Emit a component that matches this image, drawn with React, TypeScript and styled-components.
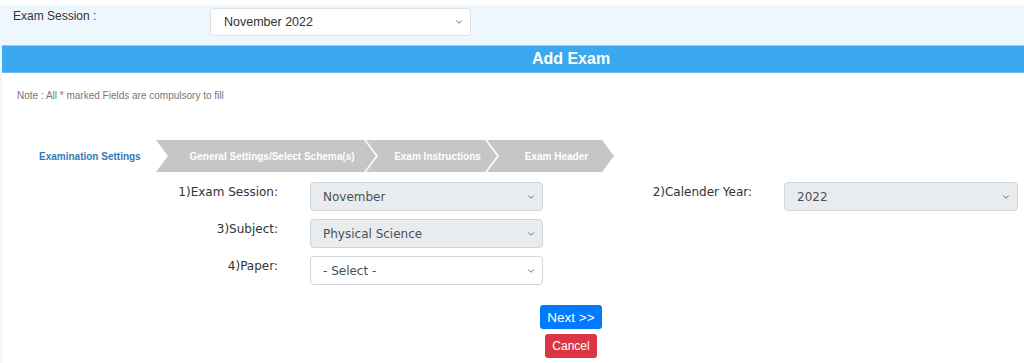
import React from "react";
import styled, { createGlobalStyle } from "styled-components";
import { ChevronDown } from "lucide-react";

const GlobalStyle = createGlobalStyle`
  body {
    margin: 0;
    background: #fff;
    font-family: "Liberation Sans", Arial, sans-serif;
  }
  * { box-sizing: border-box; }
`;

const Page = styled.div`
  padding-top: 5px;
  background: #fff;
`;

const Shell = styled.div`
  background: #eef6fe;
  padding-left: 2px;
  min-height: 358px;
`;

const SessionBar = styled.div`
  height: 40px;
  display: flex;
  align-items: flex-start;
  padding-left: 11px;
`;

const SessionLabel = styled.div`
  width: 197px;
  padding-top: 4px;
  font-size: 12px;
  line-height: 14px;
  color: #333;
`;

const SelectWrap = styled.div<{ $w: number }>`
  position: relative;
  width: ${(p) => p.$w}px;
`;

const TopSelect = styled.select`
  appearance: none;
  width: 100%;
  height: 28px;
  margin-top: 3px;
  padding: 0 24px 0 13px;
  background: #fff;
  border: 1px solid #dde1e6;
  border-radius: 4px;
  font-family: "Liberation Sans", Arial, sans-serif;
  font-size: 12.5px;
  color: #333;
`;

const FieldSelect = styled.select<{ $locked?: boolean }>`
  appearance: none;
  width: 100%;
  height: 29px;
  padding: 0 24px 0 12px;
  background: ${(p) => (p.$locked ? "#e9ecef" : "#fff")};
  border: 1px solid #ced4da;
  border-radius: 4px;
  font-family: "DejaVu Sans", Verdana, sans-serif;
  font-size: 12px;
  color: #495057;
`;

const Caret = styled.span<{ $top: number }>`
  position: absolute;
  right: 7px;
  top: ${(p) => p.$top}px;
  display: flex;
  color: #555;
  pointer-events: none;
`;

const Card = styled.div`
  background: #fff;
  min-height: 318px;
`;

const CardHeader = styled.div`
  height: 28px;
  background: #3aa9f0;
  border-top: 1px solid #8ccaf1;
  border-bottom: 1px solid #6bbcf0;
  display: flex;
  align-items: center;
  justify-content: center;
  padding-left: 116px;
  color: #fff;
  font-family: "Liberation Sans", Arial, sans-serif;
  font-weight: bold;
  font-size: 16px;
`;

const CardBody = styled.div`
  padding: 17px 6px 4px 15px;
`;

const Note = styled.div`
  font-size: 10px;
  line-height: 12px;
  color: #777;
`;

const Steps = styled.div`
  display: flex;
  align-items: center;
  margin-top: 38px;
  padding-left: 22px;
`;

const ActiveStep = styled.div`
  width: 117px;
  color: #337ab7;
  font-weight: bold;
  font-size: 10px;
`;

const Step = styled.div<{ $w: number }>`
  width: ${(p) => p.$w}px;
  height: 32px;
  padding-left: 12px;
  display: flex;
  align-items: center;
  justify-content: center;
  background: #c6c6c6;
  clip-path: polygon(0 0, calc(100% - 12px) 0, 100% 50%, calc(100% - 12px) 100%, 0 100%, 12px 50%);
  color: #fff;
  font-weight: bold;
  font-size: 10px;
  white-space: nowrap;

  & + & {
    margin-left: -10px;
  }
`;

const FormGrid = styled.div`
  display: grid;
  grid-template-columns: 261px 233px 177px 234px;
  grid-auto-rows: 29px;
  column-gap: 32px;
  row-gap: 8px;
  margin-top: 10px;
`;

const Label = styled.div`
  padding-top: 2px;
  text-align: right;
  font-family: "DejaVu Sans", Verdana, sans-serif;
  font-size: 12px;
  line-height: 16px;
  color: #333;
`;

const Actions = styled.div`
  display: flex;
  flex-direction: column;
  align-items: center;
  gap: 5px;
  margin-top: 20px;
  padding-left: 107px;
`;

const Button = styled.button<{ $variant: "primary" | "danger" }>`
  height: 24px;
  padding: 0 7px;
  border: none;
  border-radius: 3px;
  background: ${(p) => (p.$variant === "primary" ? "#007bff" : "#dc3545")};
  color: #fff;
  font-family: "Liberation Sans", Arial, sans-serif;
  font-size: ${(p) => (p.$variant === "primary" ? "13.5px" : "12px")};
  cursor: pointer;
`;

const noop = () => {};

const Field = ({ value, options, locked, w }: { value: string; options: string[]; locked?: boolean; w: number }) => (
  <SelectWrap $w={w}>
    <FieldSelect $locked={locked} value={value} onChange={noop}>
      {options.map((o) => (
        <option key={o}>{o}</option>
      ))}
    </FieldSelect>
    <Caret $top={10}>
      <ChevronDown size={10} strokeWidth={2} />
    </Caret>
  </SelectWrap>
);

const App = () => {
  return (
    <Page>
      <GlobalStyle />
      <Shell>
        <SessionBar>
          <SessionLabel>Exam Session :</SessionLabel>
          <SelectWrap $w={261}>
            <TopSelect value="November 2022" onChange={noop}>
              <option>November 2022</option>
              <option>June 2022</option>
            </TopSelect>
            <Caret $top={12}>
              <ChevronDown size={10} strokeWidth={2} />
            </Caret>
          </SelectWrap>
        </SessionBar>
        <Card>
          <CardHeader>Add Exam</CardHeader>
          <CardBody>
            <Note>Note : All * marked Fields are compulsory to fill</Note>
            <Steps>
              <ActiveStep>Examination Settings</ActiveStep>
              <Step $w={220}>General Settings/Select Schema(s)</Step>
              <Step $w={131}>Exam Instructions</Step>
              <Step $w={127}>Exam Header</Step>
            </Steps>
            <FormGrid>
              <Label>1)Exam Session:</Label>
              <Field w={233} value="November" options={["November", "June"]} locked />
              <Label>2)Calender Year:</Label>
              <Field w={234} value="2022" options={["2022", "2023"]} locked />
              <Label>3)Subject:</Label>
              <Field w={233} value="Physical Science" options={["Physical Science", "Life Science"]} locked />
              <div />
              <div />
              <Label>4)Paper:</Label>
              <Field w={233} value="- Select -" options={["- Select -", "Paper 1", "Paper 2"]} />
            </FormGrid>
            <Actions>
              <Button $variant="primary">Next &gt;&gt;</Button>
              <Button $variant="danger">Cancel</Button>
            </Actions>
          </CardBody>
        </Card>
      </Shell>
    </Page>
  );
};

export default App;
